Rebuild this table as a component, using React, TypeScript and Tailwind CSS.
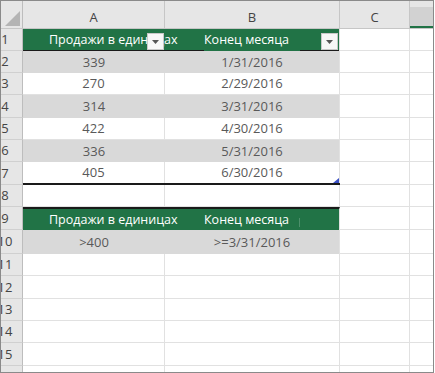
import React from 'react';

type Kind = 'head' | 'band' | 'plain' | 'empty' | 'last' | 'title';

interface SheetRow {
  n: number;
  h: number;
  kind: Kind;
  a?: string;
  b?: string;
}

const rows: SheetRow[] = [
  { n: 1, h: 22, kind: 'head', a: 'Продажи в единицах', b: 'Конец месяца' },
  { n: 2, h: 22, kind: 'band', a: '339', b: '1/31/2016' },
  { n: 3, h: 22, kind: 'plain', a: '270', b: '2/29/2016' },
  { n: 4, h: 23, kind: 'band', a: '314', b: '3/31/2016' },
  { n: 5, h: 22, kind: 'plain', a: '422', b: '4/30/2016' },
  { n: 6, h: 22, kind: 'band', a: '336', b: '5/31/2016' },
  { n: 7, h: 23, kind: 'last', a: '405', b: '6/30/2016' },
  { n: 8, h: 22, kind: 'empty' },
  { n: 9, h: 23, kind: 'title', a: 'Продажи в единицах', b: 'Конец месяца' },
  { n: 10, h: 24, kind: 'band', a: '>400', b: '>=3/31/2016' },
  { n: 11, h: 22, kind: 'empty' },
  { n: 12, h: 23, kind: 'empty' },
  { n: 13, h: 22, kind: 'empty' },
  { n: 14, h: 22, kind: 'empty' },
  { n: 15, h: 23, kind: 'empty' },
  { n: 16, h: 22, kind: 'empty' },
];

const FilterButton = () => (
  <div className="absolute right-[1px] top-[4px] flex h-[17px] w-[17px] items-center justify-center border border-[#c8c8c8] bg-[#f7f7f7]">
    <svg width="7" height="4" viewBox="0 0 7 4">
      <path d="M0 0h7L3.5 4z" fill="#555" />
    </svg>
  </div>
);

const TableCells = ({ row }: { row: SheetRow }) => {
  const { kind, a, b } = row;

  if (kind === 'head' || kind === 'title') {
    const isHead = kind === 'head';
    return (
      <div
        className={`flex w-[317px] flex-col border-r border-[#e1e1e1] bg-[#217346] text-[12.5px] text-white ${
          isHead ? '' : 'border-t-2 border-t-[#1a1a1a]'
        }`}
      >
        <div className="flex flex-1">
          <div className="relative flex w-[142px] items-center whitespace-nowrap pl-[26px] pt-[2px]">
            {a}
            {isHead && <FilterButton />}
          </div>
          <div className="relative flex w-[174px] items-center whitespace-nowrap pl-[39px] pt-[2px]">
            {b}
            {isHead ? (
              <FilterButton />
            ) : (
              <div className="absolute left-[134px] top-[9px] h-[9px] w-px bg-white/20" />
            )}
          </div>
        </div>
        {isHead ? (
          <div className="flex h-px">
            <div className="w-[181px] bg-[#1a1a1a]" />
            <div className="w-[96px]" />
            <div className="flex-1 bg-[#1a1a1a]" />
          </div>
        ) : (
          <div className="h-px" />
        )}
      </div>
    );
  }

  if (kind === 'band') {
    return (
      <div className="flex w-[317px] border-r border-[#e1e1e1] bg-[#d9d9d9] text-[#595959]">
        <div className="flex w-[142px] items-center justify-center">{a}</div>
        <div className="flex w-[174px] items-center justify-center">{b}</div>
      </div>
    );
  }

  const bottom = kind === 'last' ? 'border-b-2 border-b-[#1a1a1a]' : 'border-b border-[#e1e1e1]';
  return (
    <div className={`relative flex w-[317px] text-[#595959] ${bottom}`}>
      <div className="flex w-[142px] items-center justify-center border-r border-[#e1e1e1]">{a}</div>
      <div className="flex w-[175px] items-center justify-center border-r border-[#e1e1e1]">{b}</div>
      {kind === 'last' && (
        <svg className="absolute bottom-0 right-[1px]" width="6" height="5" viewBox="0 0 6 5">
          <path d="M6 0v5H0z" fill="#3b50c4" />
        </svg>
      )}
    </div>
  );
};

const Row = ({ row }: { row: SheetRow }) => (
  <div className="flex" style={{ height: row.h }}>
    <div className="flex w-[22px] shrink-0 items-center overflow-hidden border-b border-r border-b-[#d0d0d0] border-r-[#bdbdbd] bg-[#e6e6e6] text-[#444]">
      <div className="flex w-[8px] shrink-0 justify-center">{row.n}</div>
    </div>
    <TableCells row={row} />
    <div className="w-[70px] border-b border-r border-[#e1e1e1]" />
    <div className="flex-1 border-b border-[#e1e1e1]" />
  </div>
);

export default function App() {
  return (
    <div
      className="h-[373px] w-[434px] overflow-hidden border border-[#8a8a8a] bg-white text-[13px] leading-none"
      style={{ fontFamily: '"Open Sans", "Noto Sans", sans-serif' }}
    >
      {/* column letters */}
      <div className="flex h-[28px] border-b border-[#c6c6c6] bg-[#e6e6e6] text-[#444]">
        <div className="flex w-[22px] items-end justify-end border-r border-[#bdbdbd] pb-[2px] pr-[2px]">
          <svg width="15" height="15" viewBox="0 0 15 15">
            <path d="M15 0v15H0z" fill="#b4b4b4" />
          </svg>
        </div>
        <div className="flex w-[142px] items-end justify-center border-r border-[#c6c6c6] pb-[4px]">A</div>
        <div className="flex w-[175px] items-end justify-center border-r border-[#c6c6c6] pb-[4px]">B</div>
        <div className="flex w-[70px] items-end justify-center border-r border-[#c6c6c6] pb-[4px]">C</div>
        <div className="flex flex-1 flex-col">
          <div className="h-[6px]" />
          <div className="flex-1 border-b-2 border-[#217346] bg-[#d2d2d2]" />
        </div>
      </div>
      {rows.map((r) => (
        <Row key={r.n} row={r} />
      ))}
    </div>
  );
}
